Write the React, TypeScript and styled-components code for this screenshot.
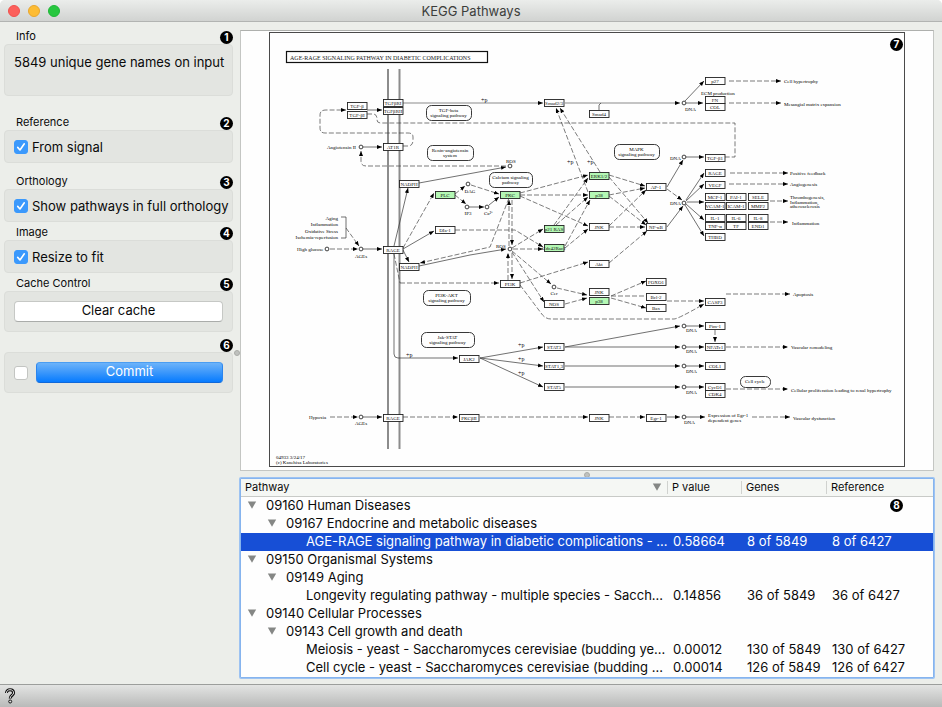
import React, { useState } from "react";
import styled, { createGlobalStyle, css } from "styled-components";

const GlobalStyle = createGlobalStyle`
  * { box-sizing: border-box; }
  body {
    margin: 0;
    background: #ffffff;
    color: #0a0a0a;
    font-family: Inter, "Liberation Sans", sans-serif;
    font-size: 13px;
    line-height: 18px;
  }
  button, input { font: inherit; color: inherit; margin: 0; }
`;

const Window = styled.div`
  display: flex;
  flex-direction: column;
  min-height: 100vh;
  background: #eceeea;
  border-radius: 5px 5px 0 0;
  overflow: hidden;
`;

const TitleBar = styled.header`
  display: grid;
  grid-template-columns: 1fr auto 1fr;
  align-items: center;
  height: 22px;
  padding: 0 8px;
  background: linear-gradient(#ebedeb, #d1d3d1);
  border-bottom: 1px solid #b2b4b2;
`;

const Lights = styled.div`
  display: flex;
  gap: 8px;
`;

const Light = styled.button<{ $color: string; $edge: string }>`
  width: 12px;
  height: 12px;
  padding: 0;
  border: 1px solid ${(p) => p.$edge};
  border-radius: 50%;
  background: ${(p) => p.$color};
`;

const Title = styled.h1`
  margin: 0;
  font-size: 13px;
  font-weight: 400;
  color: #3c3e3c;
`;

const Body = styled.div`
  display: grid;
  grid-template-columns: 233px 7px minmax(0, 1fr);
  flex: 1;
  padding-right: 8px;
`;

const Sidebar = styled.aside`
  display: flex;
  flex-direction: column;
  padding: 4px 0 0 4px;
`;

const Group = styled.section<{ $after?: number }>`
  margin-bottom: ${(p) => p.$after ?? 0}px;
`;

const GroupHead = styled.div`
  display: flex;
  align-items: flex-end;
  justify-content: space-between;
  height: 18px;
  padding-left: 12px;
`;

const GroupTitle = styled.h2`
  margin: 0;
  font-size: 11px;
  font-weight: 400;
  line-height: 16px;
`;

const GroupBox = styled.div<{ $tall?: boolean }>`
  display: flex;
  align-items: center;
  gap: 8px;
  min-height: 33px;
  padding: ${(p) => (p.$tall ? "8px 9px 24px" : "5px 10px")};
  background: #e3e5e1;
  border: 1px solid #dbddd9;
  border-radius: 4px;
`;

const ButtonBox = styled(GroupBox)`
  min-height: 41px;
  padding: 0 9px;
`;

const InfoText = styled.p`
  margin: 0;
  white-space: nowrap;
`;

const Badge = styled.span`
  display: inline-flex;
  align-items: center;
  justify-content: center;
  width: 13px;
  height: 13px;
  border-radius: 50%;
  background: #000000;
  color: #ffffff;
  font-size: 10px;
  font-weight: 700;
  line-height: 13px;
`;

const PaneBadge = styled(Badge)<{ $top: number }>`
  position: absolute;
  top: ${(p) => p.$top}px;
  right: 30px;
`;

const CheckLabel = styled.label`
  display: flex;
  align-items: center;
  gap: 4px;
  margin-left: -1px;
  white-space: nowrap;
`;

const CheckInput = styled.input`
  appearance: none;
  flex: none;
  width: 14px;
  height: 14px;
  border: 1px solid #c3c5c2;
  border-radius: 3px;
  background: #ffffff;
  &:checked {
    border-color: #3b99fc;
    background: #3b99fc
      url("data:image/svg+xml,%3Csvg xmlns='http://www.w3.org/2000/svg' viewBox='0 0 12 12'%3E%3Cpath d='M2.7 6.4 5 9 9.3 2.8' fill='none' stroke='white' stroke-width='1.6' stroke-linecap='round' stroke-linejoin='round'/%3E%3C/svg%3E")
      center / 12px 12px no-repeat;
  }
`;

const PushButton = styled.button<{ $primary?: boolean }>`
  flex: 1;
  height: 21px;
  padding: 0 0 2px;
  border: 1px solid #c6c8c5;
  border-bottom-color: #aaacaa;
  border-radius: 4px;
  background: #ffffff;
  line-height: 17px;
  ${(p) =>
    p.$primary &&
    css`
      border-color: #4a9df2 #2b85ee #1068d8;
      background: linear-gradient(#6cb3fa, #3b97fb 50%, #067bff);
      color: #ffffff;
    `}
`;

const Splitter = styled.div`
  display: flex;
  align-items: center;
  justify-content: center;
  min-height: 7px;
`;

const Grip = styled.span`
  width: 6px;
  height: 6px;
  border: 1px solid #a9aba8;
  border-radius: 50%;
  background: #bfc1be;
`;

const Content = styled.main`
  display: flex;
  flex-direction: column;
  padding: 8px 0 6px;
`;

const ImagePane = styled.section`
  position: relative;
  display: flex;
  flex: 1;
  min-height: 240px;
  padding: 1px 0 3px;
  background: #fefefe;
  border: 1px solid #c4c6c3;
  border-top-color: #aeb0ad;
`;

const Diagram = styled.svg`
  flex: 1;
  width: 100%;
  height: 0;
  min-height: 100%;
  font-family: "Liberation Serif", serif;
  font-size: 5px;
`;

const TreePane = styled.section`
  position: relative;
  border: 1px solid #86b4ee;
  box-shadow: 0 0 0 1px #9dc3f2;
  border-radius: 1px;
  background: #fefefe;
`;

const TreeTable = styled.table`
  width: 100%;
  table-layout: fixed;
  border-collapse: collapse;
`;

const HeadRow = styled.tr`
  height: 18px;
  background: #f5f7f4;
  box-shadow: inset 0 -1px 0 #c8cac7;
`;

const HeadCell = styled.th<{ $width?: number }>`
  ${(p) => p.$width && `width: ${p.$width}px;`}
  height: 18px;
  padding: 0 5px 2px 4px;
  font-size: 11px;
  font-weight: 400;
  line-height: 16px;
  text-align: left;
  & + & {
    padding-left: 5px;
    background: linear-gradient(#d0d2cf, #d0d2cf) 0 2px / 1px 13px no-repeat;
  }
`;

const HeadLabel = styled.span`
  display: flex;
  align-items: center;
  justify-content: space-between;
`;

const Row = styled.tr<{ $selected?: boolean }>`
  height: 18px;
  line-height: 16px;
  ${(p) => p.$selected && "background: #174fd6; color: #ffffff;"}
`;

const Cell = styled.td`
  height: 18px;
  padding: 0 0 2px 6px;
  white-space: nowrap;
`;

const TreeCell = styled.td<{ $depth: number }>`
  height: 18px;
  padding: 0 0 2px ${(p) => 5 + p.$depth * 20}px;
`;

const TreeItem = styled.div`
  display: flex;
  align-items: center;
  overflow: hidden;
  white-space: nowrap;
`;

const Disclosure = styled.button`
  display: flex;
  flex: none;
  align-items: center;
  width: 20px;
  height: 16px;
  padding: 0 0 0 1px;
  border: 0;
  background: none;
`;

const Spacer = styled.span`
  flex: none;
  width: 20px;
`;

const StatusBar = styled.footer`
  display: flex;
  align-items: center;
  height: 23px;
  padding: 0 4px;
  border-top: 1px solid #9c9e9c;
  background: linear-gradient(#e3e4e3, #b9bab9);
`;

const HelpButton = styled.button`
  display: flex;
  align-items: center;
  width: 12px;
  height: 20px;
  padding: 0;
  border: 0;
  background: none;
`;

const Triangle = () => (
  <svg width="10" height="8" viewBox="0 0 10 8" aria-hidden="true">
    <path d="M0.8 0.5h8.4L5 7.8z" fill="#858785" />
  </svg>
);

/* ---------- Pathway diagram ---------- */

type BoxSpec = [x: number, y: number, label: string, green?: boolean];

const boxes: BoxSpec[] = [
  [347, 102, "TGF-β"], [347, 111, "TGF-βI"],
  [383, 99, "TGFβRI"], [383, 107, "TGFβRII"], [383, 143, "AT1R"],
  [399, 180, "NADPH"], [383, 246, "RAGE"], [399, 263, "NADPH"],
  [435, 191, "PLC", true], [435, 226, "DIa-1"],
  [544, 99, "Smad2/3"], [589, 110, "Smad4"],
  [500, 191, "PKC", true], [589, 172, "ERK1/2", true], [589, 191, "p38", true],
  [646, 183, "AP-1"], [544, 225, "p21 RAS", true], [544, 244, "Cdc42Rac1", true],
  [589, 223, "JNK"], [646, 223, "NF-κB"], [589, 260, "Akt"],
  [500, 280, "PI3K"], [544, 300, "NOS"], [589, 288, "JNK"], [589, 297, "p38", true],
  [646, 278, "FOXO1"], [646, 293, "Bcl-2"], [646, 304, "Bax"],
  [459, 355, "JAK2"], [544, 343, "STAT3"], [544, 362, "STAT1,3"], [544, 383, "STAT5"],
  [383, 414, "RAGE"], [459, 414, "PKCβII"], [589, 414, "JNK"], [646, 414, "Egr-1"],
  [705, 77, "p27"], [705, 96, "FN"], [705, 103, "COL"], [705, 154, "TGF-β1"],
  [705, 169, "RAGE"], [705, 181, "VEGF"],
  [705, 193, "MCP-1"], [726, 193, "PAI-1"], [748, 193, "SELE"],
  [705, 202, "VCAM-1"], [726, 202, "ICAM-1"], [748, 202, "MMP2"],
  [705, 214, "IL-1"], [726, 214, "IL-6"], [748, 214, "IL-8"],
  [705, 222, "TNF-α"], [726, 222, "TF"], [748, 222, "END1"],
  [705, 233, "THBD"], [705, 298, "CASP3"], [705, 322, "Pim-1"], [705, 343, "NFATc1"],
  [705, 362, "COL1"], [705, 383, "CycD1"], [705, 390, "CDK4"],
];

type PillSpec = [x: number, y: number, w: number, h: number, lines: string[]];

const pills: PillSpec[] = [
  [426, 105, 45, 15, ["TGF-beta", "signaling pathway"]],
  [427, 145, 46, 15, ["Renin-angiotensin", "system"]],
  [489, 172, 43, 15, ["Calcium signaling", "pathway"]],
  [614, 144, 45, 15, ["MAPK", "signaling pathway"]],
  [423, 290, 47, 15, ["PI3K-AKT", "signaling pathway"]],
  [421, 332, 53, 15, ["Jak-STAT", "signaling pathway"]],
  [740, 376, 30, 11, ["Cell cycle"]],
];

const circles: [number, number][] = [
  [361, 147], [468, 184], [467, 207], [487, 207], [327, 249], [361, 249],
  [510, 166], [510, 249], [554, 287], [361, 417], [684, 103], [684, 157],
  [684, 203], [684, 326], [684, 347], [684, 366], [684, 387], [684, 417],
];

type TextSpec = [x: number, y: number, text: string, anchor?: "middle" | "end"];

const labels: TextSpec[] = [
  [327, 149, "Angiotensin II"], [338, 220, "Aging", "end"], [338, 226, "Inflammation", "end"],
  [338, 233, "Oxidative Stress", "end"], [338, 239, "Ischemia-reperfusion", "end"],
  [297, 251, "High glucose"], [361, 258, "AGEs", "middle"], [361, 425, "AGEs", "middle"],
  [309, 419, "Hypoxia"], [276, 459, "04933 3/24/17"], [276, 464, "(c) Kanehisa Laboratories"],
  [470, 193, "DAG", "middle"], [468, 215, "IP3", "middle"], [484, 215, "Ca²⁺"],
  [506, 163, "ROS"], [496, 248, "ROS"], [554, 295, "Cer", "middle"],
  [685, 111, "DNA"], [670, 160, "DNA"], [670, 205, "DNA"], [686, 332, "DNA"],
  [686, 353, "DNA"], [686, 373, "DNA"], [686, 394, "DNA"], [684, 424, "DNA"],
  [701, 95, "ECM production"], [784, 83, "Cell hypertrophy"], [784, 106, "Mesangial matrix expansion"],
  [790, 175, "Positive feedback"], [790, 186, "Angiogenesis"], [790, 199, "Thrombogenesis,"],
  [790, 204, "Inflammation,"], [790, 208, "atherosclerosis"], [792, 225, "Inflammation"],
  [793, 296, "Apoptosis"], [791, 349, "Vascular remodeling"],
  [791, 392, "Cellular proliferation leading to renal hypertrophy"],
  [708, 417, "Expression of Egr-1"], [708, 422, "dependent genes"], [793, 420, "Vascular dysfunction"],
];

const phosphorylations: [number, number][] = [
  [481, 102], [567, 164], [587, 164], [406, 357], [518, 347], [518, 361], [518, 375],
];

const solidArrows = [
  "M367 110H382", "M363 147H382", "M419 183 506 167", "M394 246 408 188", "M403 249 434 231",
  "M403 250 409 262", "M363 249H382", "M419 266 470 255 506 249", "M489 205 499 197",
  "M394 254V354Q394 358 398 358H458", "M363 417H382",
  "M480 358 543 347", "M480 358 543 366", "M480 358 543 387", "M565 347 680 326",
  "M565 347H680", "M565 366H680", "M565 387H680", "M667 417H680", "M686 417H705",
  "M686 326H704", "M686 347H704", "M686 366H704", "M686 387H704",
  "M686 103H703", "M685 101 704 81", "M686 157H704",
  "M686 200 704 173", "M686 201 704 184", "M687 202H704", "M686 204 704 220", "M685 205 704 236",
  "M667 187 683 160", "M667 227 683 206", "M469 207H484",
];

const greyArrows = ["M403 103H543", "M565 103H680"];

const dashedArrows = [
  "M403 146H408Q413 146 413 140V137Q413 133 408 133H325Q320 133 320 128V115Q320 110 326 110H346",
  "M506 166H366Q361 166 361 161V151", "M403 248 434 193", "M346 228 359 246", "M330 249H358",
  "M455 194 465 186", "M455 195 466 204", "M471 185 499 194", "M509 198 490 247 420 263",
  "M455 230H515L543 247", "M400 283H499", "M520 193 588 175", "M520 195H588", "M520 196 588 226",
  "M588 192 556 108", "M600 172 560 108", "M609 175 645 186", "M609 195 645 188",
  "M609 177 648 223", "M609 196 646 225", "M609 226 646 190", "M609 227H645",
  "M509 246V200", "M512 200V245", "M508 280V253", "M512 253V279",
  "M512 248 543 229", "M513 249H543", "M512 251 551 284", "M512 252 544 302",
  "M520 283 588 262", "M609 263 647 231", "M554 225 588 178", "M556 225 588 197",
  "M565 246 590 200", "M565 248 588 229", "M557 288 587 295", "M565 304 587 298",
  "M611 296 646 281", "M611 298 646 308", "M667 301H704",
  "M520 285 541 313Q545 319 551 319H674Q678 319 704 304",
  "M667 189 682 200", "M330 417H358", "M403 417H458", "M480 417H588", "M609 417H645",
  "M729 81H781", "M729 103H781", "M730 173H788", "M729 184H788", "M770 201H788",
  "M770 222H788", "M726 294H790", "M726 347H788", "M726 389H788", "M752 417H790",
  "M715 330V342",
];

const dashedLines = [
  "M367 114H373Q377 114 377 119V120Q377 123 381 123H735V157H725", "M611 296H646", "M394 254 400 283",
];

const PathwayDiagram = () => (
  <Diagram viewBox="269 32 636 435" role="img" aria-label="AGE-RAGE signaling pathway in diabetic complications">
    <defs>
      <marker id="head" markerUnits="userSpaceOnUse" markerWidth="6" markerHeight="5" refX="5" refY="2" orient="auto">
        <path d="M0 0 5 2 0 4z" fill="#000" />
      </marker>
    </defs>
    <rect x="269.5" y="32.5" width="635" height="434" fill="#fefefe" stroke="#4a4a4a" />
    <rect x="286.5" y="51.5" width="201" height="11" fill="none" stroke="#111" strokeWidth="1.2" />
    <text x="290" y="60" fontSize="6" fill="#222">AGE-RAGE SIGNALING PATHWAY IN DIABETIC COMPLICATIONS</text>
    <path d="M388 69V449M399.500 69V449" stroke="#8c8c8c" strokeWidth="2" />
    <g fill="none" strokeWidth="0.7">
      {greyArrows.map((d) => <path key={d} d={d} stroke="#8a8a8a" strokeWidth="1.2" markerEnd="url(#head)" />)}
      {solidArrows.map((d) => <path key={d} d={d} stroke="#333" markerEnd="url(#head)" />)}
      <g stroke="#444" strokeDasharray="5 2">
        {dashedArrows.map((d) => <path key={d} d={d} markerEnd="url(#head)" />)}
        {dashedLines.map((d) => <path key={d} d={d} />)}
      </g>
      <path d="M341 217H346V238H341M599 110V105L601 103" stroke="#333" />
    </g>
    {boxes.map(([x, y, label, green]) => (
      <g key={`${x}-${y}`}>
        <rect x={x + 0.5} y={y + 0.5} width="19.5" height="7" fill={green ? "#b4f8b4" : "#fefefe"} stroke="#222" strokeWidth="0.9" />
        <text x={x + 10} y={y + 6} textAnchor="middle" fill="#111">{label}</text>
      </g>
    ))}
    {pills.map(([x, y, w, h, lines]) => (
      <g key={`${x}-${y}`}>
        <rect x={x + 0.5} y={y + 0.5} width={w} height={h} rx="5" fill="#fefefe" stroke="#222" strokeWidth="0.9" />
        {lines.map((line, i) => (
          <text key={line} x={x + w / 2} y={y + 7 + i * 5} textAnchor="middle">{line}</text>
        ))}
      </g>
    ))}
    {circles.map(([x, y]) => (
      <circle key={`${x}-${y}`} cx={x} cy={y} r="1.9" fill="#fefefe" stroke="#111" strokeWidth="0.8" />
    ))}
    {labels.map(([x, y, text, anchor]) => (
      <text key={`${x}-${y}`} x={x} y={y} textAnchor={anchor}>{text}</text>
    ))}
    {phosphorylations.map(([x, y]) => (
      <text key={`${x}-${y}`} x={x} y={y} fontSize="6">+p</text>
    ))}
  </Diagram>
);

/* ---------- Pathway tree ---------- */

type TreeRow = { depth: number; name: string; p?: string; genes?: string; reference?: string };

const rows: TreeRow[] = [
  { depth: 0, name: "09160 Human Diseases" },
  { depth: 1, name: "09167 Endocrine and metabolic diseases" },
  { depth: 2, name: "AGE-RAGE signaling pathway in diabetic complications - ...", p: "0.58664", genes: "8 of 5849", reference: "8 of 6427" },
  { depth: 0, name: "09150 Organismal Systems" },
  { depth: 1, name: "09149 Aging" },
  { depth: 2, name: "Longevity regulating pathway - multiple species - Sacch...", p: "0.14856", genes: "36 of 5849", reference: "36 of 6427" },
  { depth: 0, name: "09140 Cellular Processes" },
  { depth: 1, name: "09143 Cell growth and death" },
  { depth: 2, name: "Meiosis - yeast - Saccharomyces cerevisiae (budding ye...", p: "0.00012", genes: "130 of 5849", reference: "130 of 6427" },
  { depth: 2, name: "Cell cycle - yeast - Saccharomyces cerevisiae (budding ...", p: "0.00014", genes: "126 of 5849", reference: "126 of 6427" },
];

const PathwayTree = () => {
  const [selected, setSelected] = useState(2);
  return (
    <TreePane>
      <TreeTable>
        <thead>
          <HeadRow>
            <HeadCell><HeadLabel>Pathway<Triangle /></HeadLabel></HeadCell>
            <HeadCell $width={74}>P value</HeadCell>
            <HeadCell $width={85}>Genes</HeadCell>
            <HeadCell $width={107}>Reference</HeadCell>
          </HeadRow>
        </thead>
        <tbody>
          {rows.map((row, i) => (
            <Row key={row.name} $selected={i === selected} onClick={() => setSelected(i)}>
              <TreeCell $depth={row.depth}>
                <TreeItem>
                  {row.p ? <Spacer /> : <Disclosure aria-label={`Collapse ${row.name}`}><Triangle /></Disclosure>}
                  {row.name}
                </TreeItem>
              </TreeCell>
              <Cell>{row.p}</Cell>
              <Cell>{row.genes}</Cell>
              <Cell>{row.reference}</Cell>
            </Row>
          ))}
        </tbody>
      </TreeTable>
      <PaneBadge $top={20}>8</PaneBadge>
    </TreePane>
  );
};

const GroupHeader = ({ title, n }: { title?: string; n: number }) => (
  <GroupHead>
    {title ? <GroupTitle>{title}</GroupTitle> : <span />}
    <Badge>{n}</Badge>
  </GroupHead>
);

const Check = ({ children }: { children: React.ReactNode }) => (
  <CheckLabel>
    <CheckInput type="checkbox" defaultChecked />
    {children}
  </CheckLabel>
);

export default function App() {
  return (
    <>
      <GlobalStyle />
      <Window>
        <TitleBar>
          <Lights>
            <Light $color="#fc605b" $edge="#f0514d" aria-label="Close" />
            <Light $color="#fdbc33" $edge="#e8a62c" aria-label="Minimize" />
            <Light $color="#27c73f" $edge="#1fb737" aria-label="Zoom" />
          </Lights>
          <Title>KEGG Pathways</Title>
        </TitleBar>
        <Body>
          <Sidebar>
            <Group $after={16}>
              <GroupHeader title="Info" n={1} />
              <GroupBox $tall><InfoText>5849 unique gene names on input</InfoText></GroupBox>
            </Group>
            <Group $after={8}>
              <GroupHeader title="Reference" n={2} />
              <GroupBox><Check>From signal</Check></GroupBox>
            </Group>
            <Group>
              <GroupHeader title="Orthology" n={3} />
              <GroupBox><Check>Show pathways in full orthology</Check></GroupBox>
            </Group>
            <Group>
              <GroupHeader title="Image" n={4} />
              <GroupBox><Check>Resize to fit</Check></GroupBox>
            </Group>
            <Group $after={2}>
              <GroupHeader title="Cache Control" n={5} />
              <ButtonBox><PushButton>Clear cache</PushButton></ButtonBox>
            </Group>
            <Group>
              <GroupHeader n={6} />
              <ButtonBox>
                <CheckInput type="checkbox" aria-label="Commit automatically" />
                <PushButton $primary>Commit</PushButton>
              </ButtonBox>
            </Group>
          </Sidebar>
          <Splitter><Grip /></Splitter>
          <Content>
            <ImagePane>
              <PathwayDiagram />
              <PaneBadge $top={7}>7</PaneBadge>
            </ImagePane>
            <Splitter><Grip /></Splitter>
            <PathwayTree />
          </Content>
        </Body>
        <StatusBar>
          <HelpButton aria-label="Help">
            <svg width="12" height="16" viewBox="0 0 12 16" aria-hidden="true">
              <path d="M2.5 5C2.5 2.8 4 1.7 6 1.7s3.6 1.2 3.6 3.2C9.6 7.2 6.2 7.4 6.2 10.5" fill="none" stroke="#111" strokeWidth="3" />
              <path d="M2.5 5C2.5 2.8 4 1.7 6 1.7s3.6 1.2 3.6 3.2C9.6 7.2 6.2 7.4 6.2 10" fill="none" stroke="#e8e8e8" strokeWidth="1" />
              <circle cx="6.2" cy="13.5" r="1.5" fill="#ddd" stroke="#111" />
            </svg>
          </HelpButton>
        </StatusBar>
      </Window>
    </>
  );
}
